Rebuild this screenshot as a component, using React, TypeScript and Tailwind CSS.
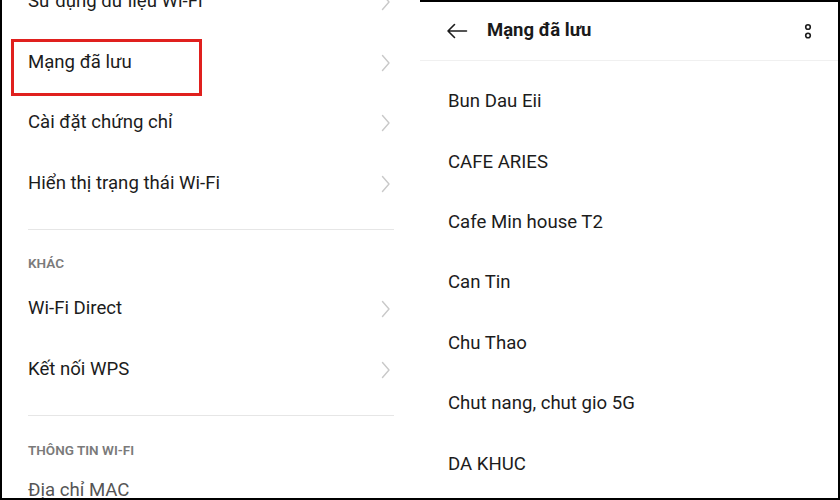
import React from "react";

const font = { fontFamily: "Roboto, 'Noto Sans', sans-serif" };

function Chevron() {
  return (
    <svg width="10" height="18" viewBox="0 0 10 18" fill="none" className="shrink-0">
      <path d="M1.5 1.5 L8 9 L1.5 16.5" stroke="#c9c9c9" strokeWidth="1.4" strokeLinecap="round" strokeLinejoin="round" />
    </svg>
  );
}

function SettingRow({ label, boxed }: { label: string; boxed?: boolean }) {
  return (
    <div className="relative flex h-[60.5px] shrink-0 items-center justify-between pl-[26px] pr-[29px]">
      <span className="text-[18.6px] text-[#1c1c1c]">{label}</span>
      <Chevron />
      {boxed && (
        <div className="pointer-events-none absolute left-[9px] top-[6px] h-[57px] w-[191px] border-[3px] border-[#e0201e]" />
      )}
    </div>
  );
}

function SectionTitle({ label, pt, h }: { label: string; pt: string; h: string }) {
  return (
    <div className={`${pt} ${h} shrink-0 pl-[26px]`}>
      <span className="text-[13.5px] font-semibold leading-[16px] text-[#7a7a7a]">{label}</span>
    </div>
  );
}

const saved = [
  "Bun Dau Eii",
  "CAFE ARIES",
  "Cafe Min house T2",
  "Can Tin",
  "Chu Thao",
  "Chut nang, chut gio 5G",
  "DA KHUC",
];

export default function App() {
  return (
    <div className="flex h-[500px] w-[840px] overflow-hidden bg-white" style={font}>
      {/* left: wifi settings */}
      <div className="flex h-full w-[420px] shrink-0 flex-col overflow-hidden border-b-2 border-l-2 border-black">
        <div className="mt-[-28px] shrink-0">
          <SettingRow label="Sử dụng dữ liệu Wi-Fi" />
          <SettingRow label="Mạng đã lưu" boxed />
          <SettingRow label="Cài đặt chứng chỉ" />
          <SettingRow label="Hiển thị trạng thái Wi-Fi" />
        </div>
        <div className="mx-[26px] mt-[15px] h-px shrink-0 bg-[#e6e6e6]" />
        <SectionTitle label="KHÁC" pt="pt-[21px]" h="h-[49px]" />
        <SettingRow label="Wi-Fi Direct" />
        <SettingRow label="Kết nối WPS" />
        <div className="mx-[26px] mt-[15px] h-px shrink-0 bg-[#e6e6e6]" />
        <SectionTitle label="THÔNG TIN WI-FI" pt="pt-[22px]" h="h-[45px]" />
        <div className="flex h-[60px] shrink-0 items-center pl-[26px]">
          <span className="text-[18.6px] text-[#555]">Địa chỉ MAC</span>
        </div>
      </div>

      {/* right: saved networks */}
      <div className="flex h-full flex-1 flex-col overflow-hidden border-r-2 border-b-2 border-t-2 border-black">
        <div className="flex h-[59px] shrink-0 items-center border-b border-[#f0f0f0] pl-[26px] pr-[26px]">
          <svg width="22" height="16" viewBox="0 0 22 16" fill="none">
            <path d="M20.5 8 H2 M8.5 1.5 L2 8 L8.5 14.5" stroke="#1c1c1c" strokeWidth="1.6" strokeLinecap="round" strokeLinejoin="round" />
          </svg>
          <span className="ml-[19px] flex-1 text-[18.5px] font-bold text-[#1a1a1a]">Mạng đã lưu</span>
          <svg width="8" height="16" viewBox="0 0 8 16" fill="none">
            <circle cx="4" cy="4" r="2.3" stroke="#1c1c1c" strokeWidth="1.6" />
            <circle cx="4" cy="12.5" r="2.3" stroke="#1c1c1c" strokeWidth="1.6" />
          </svg>
        </div>
        <div className="flex flex-col pt-[11px]">
          {saved.map((s) => (
            <div key={s} className="flex h-[60.4px] shrink-0 items-center pl-[28px]">
              <span className="text-[18.6px] text-[#1c1c1c]">{s}</span>
            </div>
          ))}
        </div>
      </div>
    </div>
  );
}
